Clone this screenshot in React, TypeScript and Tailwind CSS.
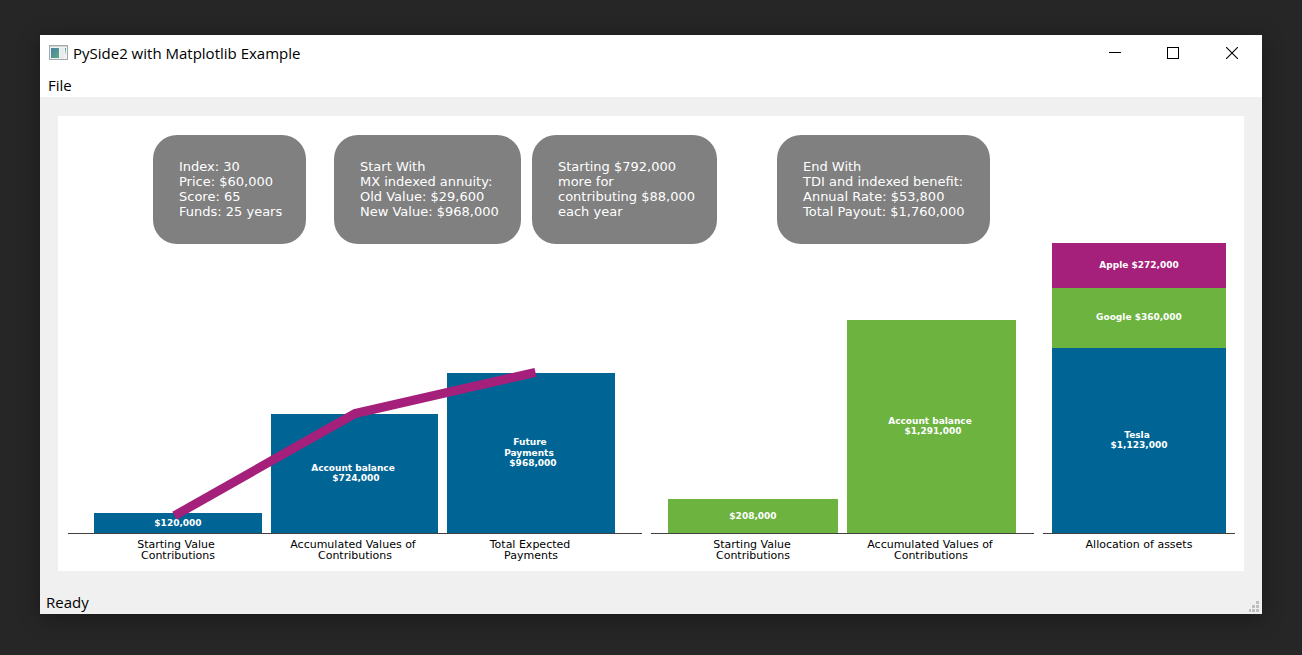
type Line = { text: string; x: number; y: number };
type Bar = { x: number; y: number; width: number; height: number; fill: string };

const BLUE = "#006595";
const GREEN = "#6cb33f";
const MAGENTA = "#a5207b";

const cards = [
  { place: "col-start-2", lines: ["Index: 30", "Price: $60,000", "Score: 65", "Funds: 25 years"] },
  { place: "col-start-4", lines: ["Start With", "MX indexed annuity:", "Old Value: $29,600", "New Value: $968,000"] },
  { place: "col-start-6", lines: ["Starting $792,000", "more for", "contributing $88,000", "each year"] },
  { place: "col-start-8", lines: ["End With", "TDI and indexed benefit:", "Annual Rate: $53,800", "Total Payout: $1,760,000"] },
];

const bars: Bar[] = [
  { x: 36, y: 271, width: 168, height: 20, fill: BLUE },
  { x: 213, y: 172, width: 167, height: 119, fill: BLUE },
  { x: 389, y: 131, width: 168, height: 160, fill: BLUE },
  { x: 610, y: 257, width: 170, height: 34, fill: GREEN },
  { x: 789, y: 78, width: 169, height: 213, fill: GREEN },
  { x: 994, y: 1, width: 174, height: 45, fill: MAGENTA },
  { x: 994, y: 46, width: 174, height: 60, fill: GREEN },
  { x: 994, y: 106, width: 174, height: 185, fill: BLUE },
];

const axes = [
  { x: 10, width: 574 },
  { x: 593, width: 383 },
  { x: 985, width: 192 },
];

const barLabels: Line[] = [
  { text: "$120,000", x: 120, y: 284 },
  { text: "Account balance", x: 295, y: 229 },
  { text: "$724,000", x: 298, y: 239 },
  { text: "Future", x: 472, y: 203 },
  { text: "Payments", x: 471, y: 214 },
  { text: "$968,000", x: 475, y: 224 },
  { text: "$208,000", x: 695, y: 277 },
  { text: "Account balance", x: 872, y: 182 },
  { text: "$1,291,000", x: 875, y: 192 },
  { text: "Apple $272,000", x: 1081, y: 26 },
  { text: "Google $360,000", x: 1081, y: 78 },
  { text: "Tesla", x: 1079, y: 196 },
  { text: "$1,123,000", x: 1081, y: 206 },
];

const tickLabels: Line[] = [
  { text: "Starting Value", x: 118, y: 306 },
  { text: "Contributions", x: 120, y: 317 },
  { text: "Accumulated Values of", x: 295, y: 306 },
  { text: "Contributions", x: 297, y: 317 },
  { text: "Total Expected", x: 472, y: 306 },
  { text: "Payments", x: 473, y: 317 },
  { text: "Starting Value", x: 694, y: 306 },
  { text: "Contributions", x: 695, y: 317 },
  { text: "Accumulated Values of", x: 872, y: 306 },
  { text: "Contributions", x: 873, y: 317 },
  { text: "Allocation of assets", x: 1081, y: 306 },
];

function AppIcon() {
  return (
    <svg width="20" height="16" viewBox="0 0 20 16" aria-hidden="true">
      <defs>
        <linearGradient id="screen" x1="0" y1="0" x2="1" y2="1">
          <stop offset="0" stopColor="#4a7fa8" />
          <stop offset="1" stopColor="#5aaa80" />
        </linearGradient>
        <linearGradient id="strip" x1="0" y1="0" x2="0" y2="1">
          <stop offset="0" stopColor="#4f93a0" />
          <stop offset="1" stopColor="#e4ece8" />
        </linearGradient>
      </defs>
      <rect x="0.5" y="0.5" width="18" height="14" fill="#f1f3f3" stroke="#a3a8ab" />
      <rect x="1" y="1" width="17" height="1" fill="#d3d8da" />
      <rect x="2" y="3" width="8" height="10" fill="url(#screen)" />
      <rect x="11" y="3" width="4" height="10" fill="#e9ebec" />
      <rect x="16" y="3" width="1" height="7" fill="url(#strip)" />
    </svg>
  );
}

function TitleBar() {
  return (
    <header className="flex h-9 items-center justify-between bg-white">
      <div className="flex items-center gap-1 pl-[9px]">
        <AppIcon />
        <h1 className="text-[15px] leading-5">PySide2 with Matplotlib Example</h1>
      </div>
      <div className="flex">
        <button type="button" aria-label="Minimize" className="flex h-9 w-[58px] items-center justify-center">
          <svg width="12" height="12" viewBox="0 0 12 12" shapeRendering="crispEdges">
            <path d="M0 5.5H12" stroke="#000" />
          </svg>
        </button>
        <button type="button" aria-label="Maximize" className="flex h-9 w-[58px] items-center justify-center">
          <svg width="12" height="12" viewBox="0 0 12 12" shapeRendering="crispEdges">
            <rect x="0.5" y="0.5" width="11" height="11" fill="none" stroke="#000" />
          </svg>
        </button>
        <button type="button" aria-label="Close" className="flex h-9 w-[60px] items-center justify-center">
          <svg width="12" height="12" viewBox="0 0 12 12">
            <path d="M0 0L12 12M12 0L0 12" stroke="#000" strokeWidth="1.1" />
          </svg>
        </button>
      </div>
    </header>
  );
}

function Cards() {
  return (
    <div className="grid h-32 grid-cols-[minmax(0,95fr)_minmax(0,153fr)_minmax(0,28fr)_minmax(0,187fr)_minmax(0,11fr)_minmax(0,185fr)_minmax(0,60fr)_minmax(0,213fr)_minmax(0,254fr)] pt-[19px]">
      {cards.map((card) => (
        <div
          key={card.lines[0]}
          className={`${card.place} row-start-1 h-[109px] rounded-3xl bg-[#808080] pt-6 pl-[26px] text-[13px] leading-[15px] whitespace-nowrap text-white`}
        >
          {card.lines.map((line) => (
            <p key={line}>{line}</p>
          ))}
        </div>
      ))}
    </div>
  );
}

function Chart() {
  return (
    <svg viewBox="0 0 1186 329" className="-mt-0.5 block h-auto w-full" role="img" aria-label="Contributions and assets">
      {bars.map((bar) => (
        <rect key={`${bar.x}-${bar.y}`} {...bar} />
      ))}
      {axes.map((axis) => (
        <rect key={axis.x} x={axis.x} y={291} width={axis.width} height={1} fill="#404040" />
      ))}
      <g className="text-[9px] font-bold" fill="#ffffff" textAnchor="middle">
        {barLabels.map((label) => (
          <text key={`${label.x}-${label.y}`} x={label.x} y={label.y}>
            {label.text}
          </text>
        ))}
      </g>
      <polyline points="116.5,273.7 297,171.5 477.5,130.3" fill="none" stroke={MAGENTA} strokeWidth="9" />
      <g className="text-[11px]" fill="#000000" textAnchor="middle">
        {tickLabels.map((label) => (
          <text key={`${label.x}-${label.y}`} x={label.x} y={label.y}>
            {label.text}
          </text>
        ))}
      </g>
    </svg>
  );
}

function SizeGrip() {
  return (
    <svg width="10" height="11" viewBox="0 0 10 11" fill="#bfbfbf" shapeRendering="crispEdges" aria-hidden="true">
      <path d="M7 0h3v3h-3zM3 4h3v3h-3zM7 4h3v3h-3zM0 8h2v3h-2zM3 8h3v3h-3zM7 8h3v3h-3z" />
    </svg>
  );
}

export default function App() {
  return (
    <div className="min-h-screen bg-[#262626] px-10 pt-[35px] pb-10 font-['Open_Sans','Noto_Sans',sans-serif] text-black">
      <div className="bg-[#f0f0f0] shadow-[0_4px_20px_rgba(0,0,0,0.35)]">
        <TitleBar />
        <nav className="flex h-[26px] items-end bg-white pb-0.5 pl-2">
          <button type="button" className="text-[15px] leading-5">
            File
          </button>
        </nav>
        <main className="px-[18px] pt-[19px]">
          <section className="bg-white font-['DejaVu_Sans',sans-serif]">
            <Cards />
            <Chart />
          </section>
        </main>
        <footer className="flex h-[43px] items-end justify-between pr-[3px] pb-0.5 pl-1.5">
          <span className="text-[15px] leading-5">Ready</span>
          <SizeGrip />
        </footer>
      </div>
    </div>
  );
}
